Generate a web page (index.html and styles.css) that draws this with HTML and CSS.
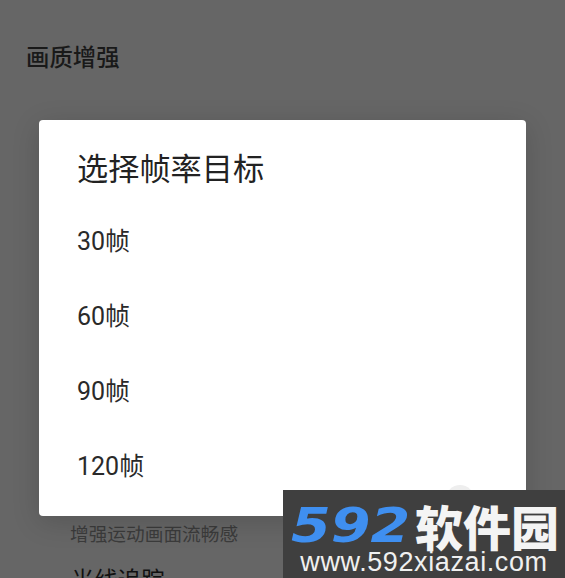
FILE: index.html
```html
<!DOCTYPE html>
<html lang="zh-CN">
<head>
<meta charset="utf-8">
<title>选择帧率目标</title>
<link rel="stylesheet" href="styles.css">
</head>
<body>
<main class="page">
  <h2 class="section">画质增强</h2>
  <p class="desc">增强运动画面流畅感</p>
  <h2 class="section next">光线追踪</h2>
</main>
<section class="dialog">
  <h1 class="dialog-title">选择帧率目标</h1>
  <ul class="options">
    <li>30帧</li>
    <li>60帧</li>
    <li>90帧</li>
    <li>120帧</li>
  </ul>
  <span class="ghost"></span>
</section>
<aside class="mark">
  <div class="brand"><span class="num">592</span><span class="cn">软件园</span></div>
  <div class="url">www.592xiazai.com</div>
</aside>
</body>
</html>
```
FILE: styles.css
```css
* { box-sizing: border-box; }
html, body { margin: 0; padding: 0; }
body {
  width: 565px;
  height: 578px;
  overflow: hidden;
  position: relative;
  background: #666;
  font-family: Roboto, "Noto Sans CJK SC", "Noto Sans", sans-serif;
}
.page {
  display: flex;
  flex-direction: column;
  padding: 41px 0 0 26px;
}
.section {
  margin: 0;
  font-size: 23.4px;
  line-height: 34px;
  font-weight: 500;
  color: #191919;
}
.desc {
  margin: 446px 0 0 44px;
  font-size: 18.7px;
  line-height: 28px;
  color: #3b3b3b;
}
.next { margin: 15px 0 0 45px; font-weight: 400; color: #111; }
.dialog {
  position: absolute;
  left: 39px;
  top: 120px;
  width: 487px;
  height: 396px;
  background: #fff;
  border-radius: 4px;
  padding: 27px 0 0 38px;
  box-shadow: 0 6px 28px rgba(0, 0, 0, .16);
}
.dialog-title {
  margin: 0;
  font-size: 31.2px;
  line-height: 46px;
  font-weight: 400;
  color: #222;
}
.options {
  list-style: none;
  margin: 11px 0 0;
  padding: 0;
}
.options li {
  height: 75px;
  line-height: 75px;
  font-size: 25px;
  color: #2a2a2a;
}
.ghost {
  position: absolute;
  left: 407px;
  top: 365px;
  width: 28px;
  height: 28px;
  border-radius: 50%;
  background: #eee;
}
.mark {
  position: absolute;
  left: 283px;
  top: 490px;
  width: 282px;
  height: 88px;
  background: #3f3f3f;
  display: flex;
  flex-direction: column;
  align-items: center;
}
.brand {
  display: flex;
  align-items: center;
  height: 50px;
  margin-top: 10px;
  width: 282px;
  padding-left: 8px;
}
.num {
  display: inline-block;
  font-family: "DejaVu Sans", sans-serif;
  font-weight: 700;
  font-style: italic;
  font-size: 48px;
  line-height: 50px;
  color: #3f8ff0;
  width: 124px;
  flex: none;
  white-space: nowrap;
  transform: scaleX(1.19);
  transform-origin: left center;
}
.cn {
  font-family: "Noto Sans CJK SC", sans-serif;
  font-weight: 900;
  font-size: 48px;
  line-height: 50px;
  color: #f4f4f4;
  white-space: nowrap;
}
.url {
  font-family: "Liberation Sans", sans-serif;
  font-size: 27px;
  line-height: 24px;
  color: #f0f0f0;
  letter-spacing: .6px;
  white-space: nowrap;
}
```
